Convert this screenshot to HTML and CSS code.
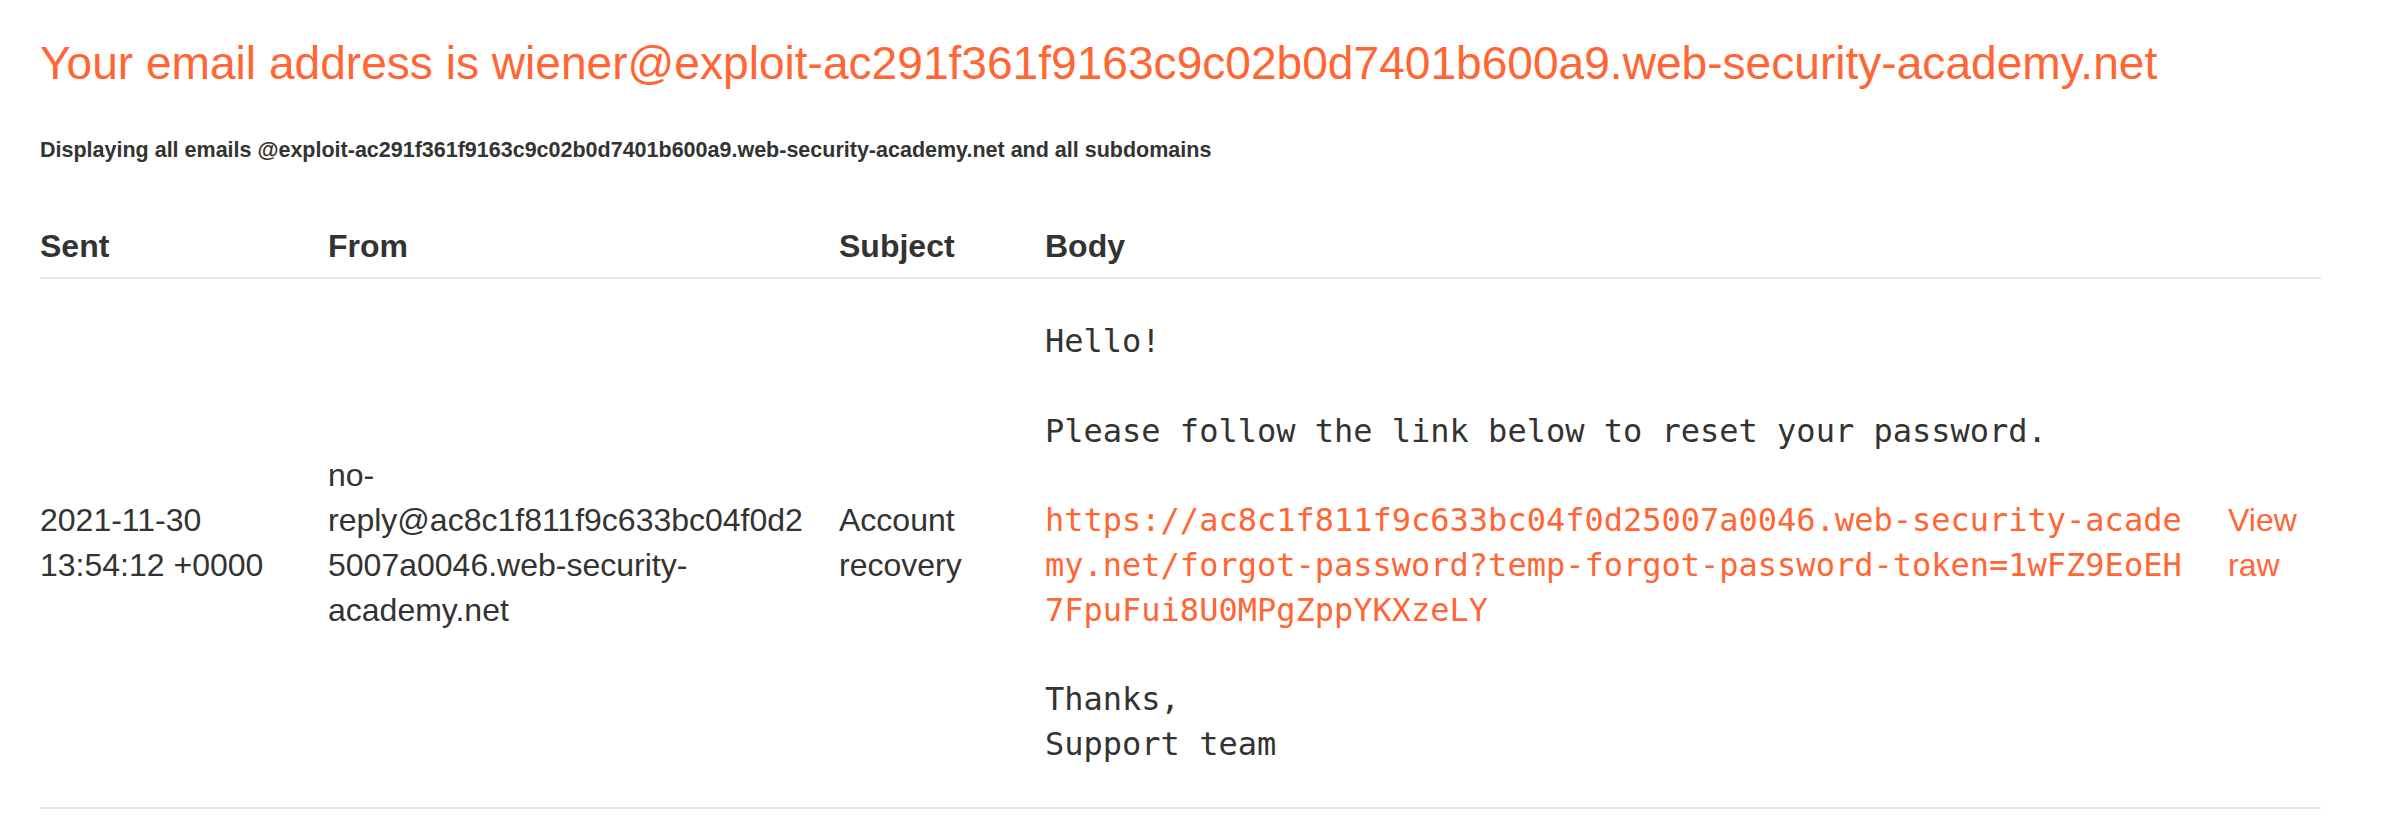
FILE: index.html
```html
<!DOCTYPE html>
<html lang="en">
<head>
<meta charset="utf-8">
<title>Email client</title>
<link rel="stylesheet" href="styles.css">
</head>
<body>
<div class="page">
  <h1 class="title">Your email address is wiener@exploit-ac291f361f9163c9c02b0d7401b600a9.web-security-academy.net</h1>
  <h4 class="subtitle">Displaying all emails @exploit-ac291f361f9163c9c02b0d7401b600a9.web-security-academy.net and all subdomains</h4>
  <table class="emails">
    <thead>
      <tr>
        <th class="c-sent">Sent</th>
        <th class="c-from">From</th>
        <th class="c-subject">Subject</th>
        <th class="c-body">Body</th>
        <th class="c-raw"></th>
      </tr>
    </thead>
    <tbody>
      <tr>
        <td>2021-11-30 13:54:12 +0000</td>
        <td>no-reply@ac8c1f811f9c633bc04f0d25007a0046.web-security-academy.net</td>
        <td>Account recovery</td>
        <td class="c-body"><pre class="mail">Hello!

Please follow the link below to reset your password.

<a class="link" href="#">https://ac8c1f811f9c633bc04f0d25007a0046.web-security-academy.net/forgot-password?temp-forgot-password-token=1wFZ9EoEH7FpuFui8U0MPgZppYKXzeLY</a>

Thanks,
Support team</pre></td>
        <td><a class="link raw" href="#">View raw</a></td>
      </tr>
    </tbody>
  </table>
</div>
</body>
</html>
```

FILE: styles.css
```css
html, body {
  margin: 0;
  padding: 0;
  background: #ffffff;
}

body {
  font-family: "Liberation Sans", Arial, Helvetica, sans-serif;
  color: #333332;
  font-size: 32px;
  line-height: 1.4;
}

.page {
  padding: 36px 81px 0 40px;
}

.title {
  margin: 0;
  font-size: 46.1px;
  font-weight: normal;
  line-height: 1.2;
  color: #ff6633;
  white-space: nowrap;
}

.subtitle {
  margin: 47px 0 0;
  font-size: 21.5px;
  font-weight: bold;
  line-height: 1.2;
  color: #333332;
}

.emails {
  margin-top: 52px;
  width: 2281px;
  border-collapse: collapse;
  table-layout: fixed;
}

.emails th,
.emails td {
  box-sizing: border-box;
  text-align: left;
  vertical-align: middle;
  padding: 8px 24px 8px 0;
  overflow-wrap: anywhere;
}

.emails th {
  font-weight: bold;
  border-bottom: 2px solid #e6e6e6;
}

.emails td {
  padding-top: 40px;
  padding-bottom: 40px;
  border-bottom: 2px solid #e6e6e6;
}

.c-sent { width: 288px; }
.c-from { width: 511px; }
.c-subject { width: 206px; }
.emails .c-body { width: 1183px; padding-right: 32px; }
.emails .c-raw { width: 93px; padding-right: 0; }

.mail {
  margin: 0;
  font-family: "DejaVu Sans Mono", "Liberation Mono", monospace;
  font-size: 32px;
  line-height: 1.4;
  white-space: pre-wrap;
  word-break: break-all;
  color: #333332;
}

.link {
  color: #ff6633;
  text-decoration: none;
}

.raw {
  font-family: "Liberation Sans", Arial, Helvetica, sans-serif;
}
```
